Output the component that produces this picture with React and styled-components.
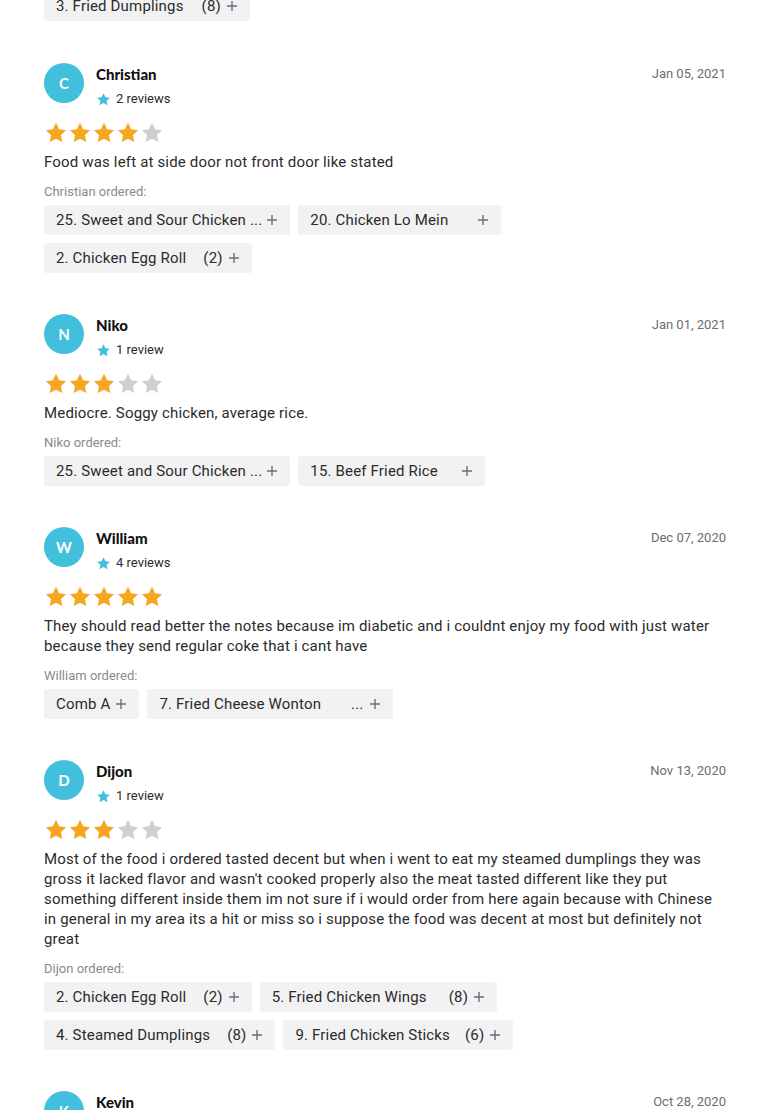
import React from "react";
import styled, { createGlobalStyle } from "styled-components";

const GlobalStyle = createGlobalStyle`
  body {
    margin: 0;
    background: #ffffff;
    font-family: Roboto, "Liberation Sans", sans-serif;
    color: #2b2b2b;
  }
`;

const reviews = [
  {
    name: "Christian",
    count: "2 reviews",
    date: "Jan 05, 2021",
    rating: 4,
    text: "Food was left at side door not front door like stated",
    items: [
      { name: "25. Sweet and Sour Chicken ...", space: 4 },
      { name: "20. Chicken Lo Mein", space: 29 },
      { name: "2. Chicken Egg Roll", qty: "(2)", space: 17 },
    ],
  },
  {
    name: "Niko",
    count: "1 review",
    date: "Jan 01, 2021",
    rating: 3,
    text: "Mediocre. Soggy chicken, average rice.",
    items: [
      { name: "25. Sweet and Sour Chicken ...", space: 4 },
      { name: "15. Beef Fried Rice", space: 23 },
    ],
  },
  {
    name: "William",
    count: "4 reviews",
    date: "Dec 07, 2020",
    rating: 5,
    text: "They should read better the notes because im diabetic and i couldnt enjoy my food with just water because they send regular coke that i cant have",
    items: [
      { name: "Comb A", space: 5 },
      { name: "7. Fried Cheese Wonton", qty: "...", space: 30 },
    ],
  },
  {
    name: "Dijon",
    count: "1 review",
    date: "Nov 13, 2020",
    rating: 3,
    text: "Most of the food i ordered tasted decent but when i went to eat my steamed dumplings they was gross it lacked flavor and wasn't cooked properly also the meat tasted different like they put something different inside them im not sure if i would order from here again because with Chinese in general in my area its a hit or miss so i suppose the food was decent at most but definitely not great",
    items: [
      { name: "2. Chicken Egg Roll", qty: "(2)", space: 17 },
      { name: "5. Fried Chicken Wings", qty: "(8)", space: 22 },
      { name: "4. Steamed Dumplings", qty: "(8)", space: 17 },
      { name: "9. Fried Chicken Sticks", qty: "(6)", space: 15 },
    ],
  },
  {
    name: "Kevin",
    count: "3 reviews",
    date: "Oct 28, 2020",
    rating: 5,
    text: "Good food",
    items: [{ name: "1. Egg Drop Soup", space: 20 }],
  },
];

const Page = styled.div`
  padding: 0 44px 40px;
  overflow: hidden;
`;

const Tail = styled.div`
  margin-top: -14px;
  margin-bottom: 42px;
`;

const Review = styled.section`
  margin-bottom: 41px;
`;

const Header = styled.div`
  display: flex;
  align-items: flex-start;
  gap: 12px;
`;

const Avatar = styled.div`
  width: 40px;
  height: 40px;
  border-radius: 50%;
  background: #42bfdd;
  color: #ffffff;
  display: flex;
  align-items: center;
  justify-content: center;
  font-family: Lato, "Liberation Sans", sans-serif;
  font-weight: 700;
  font-size: 15px;
  flex-shrink: 0;
`;

const Who = styled.div`
  flex: 1;
  display: flex;
  flex-direction: column;
  padding-top: 2px;
`;

const Name = styled.div`
  font-family: Lato, "Liberation Sans", sans-serif;
  font-weight: 900;
  font-size: 15px;
  line-height: 18px;
  color: #111111;
`;

const Count = styled.div`
  display: flex;
  align-items: center;
  gap: 5px;
  margin-top: 8px;
  font-size: 13px;
  line-height: 16px;
  color: #2b2b2b;
`;

const DateText = styled.div`
  font-size: 13px;
  line-height: 16px;
  color: #6d6d6d;
  padding-top: 3px;
`;

const Stars = styled.div`
  display: flex;
  margin-top: 14px;
  height: 24px;
`;

const Text = styled.p`
  margin: 7px 0 0;
  font-size: 15px;
  line-height: 20px;
  letter-spacing: 0.17px;
  color: #2b2b2b;
`;

const Label = styled.div`
  margin-top: 12px;
  font-size: 13px;
  line-height: 16px;
  color: #8a8a8a;
`;

const Chips = styled.div`
  display: flex;
  flex-wrap: wrap;
  gap: 8px;
  margin-top: 5px;
  max-width: 600px;
`;

const Chip = styled.div`
  display: inline-flex;
  align-items: center;
  height: 30px;
  padding: 0 12px;
  background: #f2f2f3;
  border-radius: 2px;
  font-size: 15px;
  letter-spacing: 0.17px;
  color: #2b2b2b;
  white-space: nowrap;
`;

const ItemName = styled.span`
  margin-right: ${(p) => p.$space}px;
`;

const Qty = styled.span`
  margin-right: 5px;
`;

const Star = ({ color, size = 24 }) => (
  <svg width={size} height={size} viewBox="0 0 24 24">
    <path
      fill={color}
      d="M12 1.8l3.1 6.5 7 .9-5.1 4.9 1.3 7L12 17.7l-6.3 3.4 1.3-7-5.1-4.9 7-.9z"
    />
  </svg>
);

const Plus = () => (
  <svg width="12" height="12" viewBox="0 0 12 12">
    <path d="M6 1v10M1 6h10" stroke="#6c6c84" strokeWidth="1.4" />
  </svg>
);

const ItemChip = ({ item }) => (
  <Chip>
    <ItemName $space={item.space}>{item.name}</ItemName>
    {item.qty && <Qty>{item.qty}</Qty>}
    <Plus />
  </Chip>
);

const ReviewCard = ({ r }) => (
  <Review>
    <Header>
      <Avatar>{r.name[0]}</Avatar>
      <Who>
        <Name>{r.name}</Name>
        <Count>
          <Star color="#42bfdd" size={15} />
          {r.count}
        </Count>
      </Who>
      <DateText>{r.date}</DateText>
    </Header>
    <Stars>
      {[1, 2, 3, 4, 5].map((n) => (
        <Star key={n} color={n <= r.rating ? "#f6a623" : "#cfcfcf"} />
      ))}
    </Stars>
    <Text>{r.text}</Text>
    <Label>{r.name} ordered:</Label>
    <Chips>
      {r.items.map((item, i) => (
        <ItemChip key={i} item={item} />
      ))}
    </Chips>
  </Review>
);

export default function App() {
  return (
    <Page>
      <GlobalStyle />
      <Tail>
        <Chips>
          <ItemChip item={{ name: "3. Fried Dumplings", qty: "(8)", space: 18 }} />
        </Chips>
      </Tail>
      {reviews.map((r) => (
        <ReviewCard key={r.name} r={r} />
      ))}
    </Page>
  );
}
